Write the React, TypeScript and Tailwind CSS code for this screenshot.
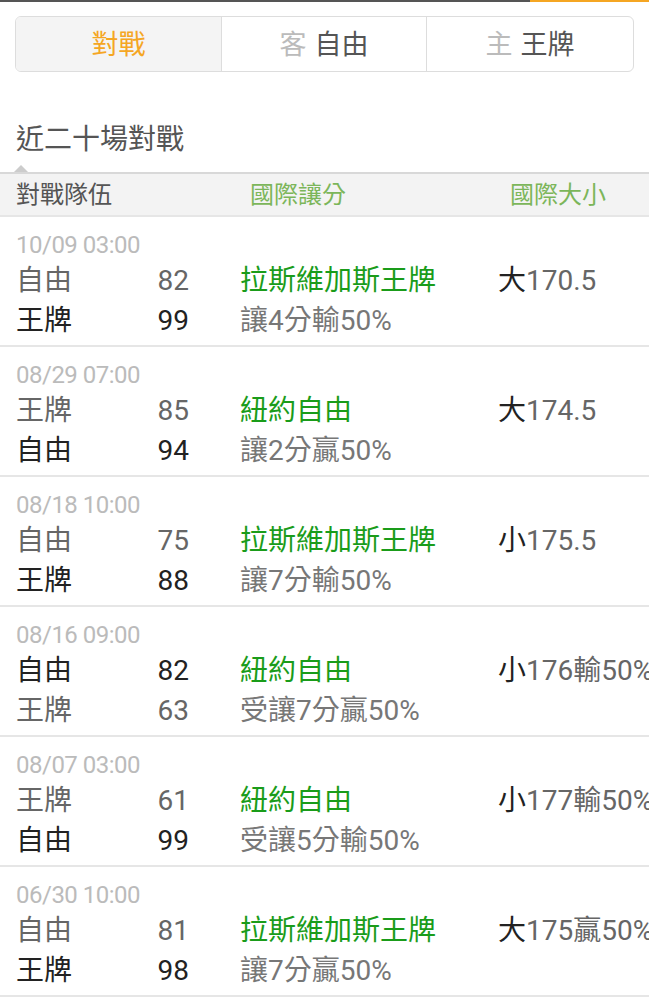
import React from 'react';

type Match = {
    date: string;
    home: [string, number, boolean];
    away: [string, number, boolean];
    team: string;
    spread: string;
    ouMark: string;
    ou: string;
};

const matches: Match[] = [
    { date: '10/09 03:00', home: ['自由', 82, false], away: ['王牌', 99, true], team: '拉斯維加斯王牌', spread: '讓4分輸50%', ouMark: '大', ou: '170.5' },
    { date: '08/29 07:00', home: ['王牌', 85, false], away: ['自由', 94, true], team: '紐約自由', spread: '讓2分贏50%', ouMark: '大', ou: '174.5' },
    { date: '08/18 10:00', home: ['自由', 75, false], away: ['王牌', 88, true], team: '拉斯維加斯王牌', spread: '讓7分輸50%', ouMark: '小', ou: '175.5' },
    { date: '08/16 09:00', home: ['自由', 82, true], away: ['王牌', 63, false], team: '紐約自由', spread: '受讓7分贏50%', ouMark: '小', ou: '176輸50%' },
    { date: '08/07 03:00', home: ['王牌', 61, false], away: ['自由', 99, true], team: '紐約自由', spread: '受讓5分輸50%', ouMark: '小', ou: '177輸50%' },
    { date: '06/30 10:00', home: ['自由', 81, false], away: ['王牌', 98, true], team: '拉斯維加斯王牌', spread: '讓7分贏50%', ouMark: '大', ou: '175贏50%' },
];

const TeamLine: React.FC<{ t: [string, number, boolean] }> = ({ t }) => (
    <div className={`flex ${t[2] ? 'text-[#222]' : 'text-[#666]'}`}>
        <span className="w-[113px]">{t[0]}</span>
        <span className="w-[60px] text-right">{t[1]}</span>
    </div>
);

const MatchRow: React.FC<{ m: Match }> = ({ m }) => (
    <div className="border-b-2 border-[#e6e6e6] pl-4 pt-[12px] pb-[4px]">
        <div className="text-[24px] leading-[32px] text-[#bbb] tracking-[-0.5px]">{m.date}</div>
        <div className="flex text-[28px] leading-[40px] whitespace-nowrap">
            <div className="w-[173px] shrink-0">
                <TeamLine t={m.home} />
                <TeamLine t={m.away} />
            </div>
            <div className="ml-[51px] w-[258px] shrink-0">
                <div className="text-[#1a9c1a]">{m.team}</div>
                <div className="text-[#777]">{m.spread}</div>
            </div>
            <div className="shrink-0">
                <span className="text-[#222]">{m.ouMark}</span>
                <span className="text-[#666]">{m.ou}</span>
            </div>
        </div>
    </div>
);

const App: React.FC = () => {
    return (
        <div
            className="w-[649px] h-[1000px] overflow-hidden bg-white"
            style={{ fontFamily: 'Roboto, "Noto Sans CJK TC", sans-serif' }}
        >
            <div className="flex h-[2px]">
                <div className="flex-1 bg-[#555]" />
                <div className="w-[119px] bg-[#f5a623]" />
            </div>

            <div className="mx-[15px] mt-[14px] h-[56px] flex border border-[#ddd] rounded-md overflow-hidden text-[27px]">
                <div className="w-[206px] bg-[#f4f4f4] flex items-center justify-center pt-[3px] text-[#f5a623] border-r border-[#ddd]">
                    對戰
                </div>
                <div className="w-[205px] flex items-center justify-center pt-[3px] border-r border-[#ddd]">
                    <span className="text-[#bbb]">客</span>
                    <span className="text-[#555] ml-2">自由</span>
                </div>
                <div className="flex-1 flex items-center justify-center pt-[3px]">
                    <span className="text-[#bbb]">主</span>
                    <span className="text-[#555] ml-2">王牌</span>
                </div>
            </div>

            <div className="relative mt-[48px] pl-4 pb-[12px] text-[28px] leading-[40px] text-[#555]">
                近二十場對戰
                <div className="absolute left-[14px] bottom-0 w-0 h-0 border-l-[7px] border-r-[7px] border-b-[7px] border-l-transparent border-r-transparent border-b-[#ccc]" />
            </div>

            <div className="flex items-center h-[45px] bg-[#f3f3f3] border-t-2 border-b-2 border-t-[#d8d8d8] border-b-[#e6e6e6] pl-4 text-[24px]">
                <span className="w-[234px] text-[#555]">對戰隊伍</span>
                <span className="w-[260px] text-[#7cb65a]">國際讓分</span>
                <span className="text-[#7cb65a]">國際大小</span>
            </div>

            {matches.map((m) => (
                <MatchRow key={m.date} m={m} />
            ))}
        </div>
    );
};

export default App;
